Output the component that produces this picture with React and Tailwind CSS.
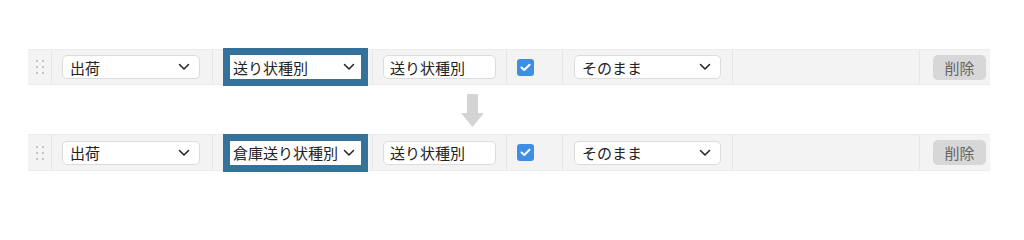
import React from 'react';

const font = { fontFamily: '"Noto Sans CJK JP", "Noto Sans", sans-serif' };

function Chevron() {
  return (
    <svg width="12" height="8" viewBox="0 0 12 8" className="shrink-0">
      <polyline points="1.5,1.5 6,6 10.5,1.5" fill="none" stroke="#222" strokeWidth="1.5" strokeLinecap="round" strokeLinejoin="round" />
    </svg>
  );
}

function FakeSelect({ label, className }) {
  return (
    <div className={'flex items-center justify-between bg-white border border-[#dcdcdc] rounded-[5px] pl-[7px] pr-[9px] text-[15px] text-[#222] ' + className}>
      <span className="leading-none whitespace-nowrap">{label}</span>
      <Chevron />
    </div>
  );
}

function DragHandle() {
  return (
    <div className="grid grid-cols-2 gap-x-[4px] gap-y-[4px]">
      {[0, 1, 2, 3, 4, 5].map((i) => (
        <span key={i} className="block w-[2px] h-[2px] bg-[#c4c4c4]"></span>
      ))}
    </div>
  );
}

function Row({ highlightLabel, tall }) {
  return (
    <div className={'flex w-[962px] bg-[#f3f3f3] border-y border-[#ececec] ' + (tall ? 'h-[37px]' : 'h-9')}>
      {/* ドラッグ */}
      <div className="w-[24px] flex items-center justify-center border-r border-[#e6e6e6]">
        <DragHandle />
      </div>
      <div className="w-[161px] flex items-center pl-[10px] border-r border-[#e6e6e6]">
        <FakeSelect label="出荷" className="w-[138px] h-6" />
      </div>
      {/* 強調表示 */}
      <div className="w-[160px] flex items-center pl-[16px] border-r border-[#e6e6e6]">
        <FakeSelect
          label={highlightLabel}
          className="w-[133px] h-[26px] outline-[6px] outline-solid outline-[#34729c] !border-[#34729c] !rounded-none !pr-[6px] !pl-[3px]"
        />
      </div>
      <div className="w-[134px] flex items-center pl-[10px] border-r border-[#e6e6e6]">
        <div className="w-[113px] h-6 flex items-center bg-white border border-[#dcdcdc] rounded-[5px] px-[6px] text-[15px] text-[#222]">
          <span className="leading-none">送り状種別</span>
        </div>
      </div>
      <div className="w-[56px] flex items-center pl-[10px] border-r border-[#e6e6e6]">
        <div className="w-[17px] h-[17px] rounded-[3px] bg-[#3d8fe6] flex items-center justify-center">
          <svg width="11" height="9" viewBox="0 0 11 9">
            <polyline points="1.5,4.5 4.3,7 9.5,1.8" fill="none" stroke="#fff" strokeWidth="2" strokeLinecap="round" strokeLinejoin="round" />
          </svg>
        </div>
      </div>
      <div className="w-[170px] flex items-center pl-[11px] border-r border-[#e6e6e6]">
        <FakeSelect label="そのまま" className="w-[147px] h-6" />
      </div>
      <div className="w-[187px] border-r border-[#e6e6e6]"></div>
      <div className="flex-1 flex items-center justify-end pr-[4px]">
        <div className="w-[53px] h-[25px] rounded-[5px] bg-[#d7d7d7] flex items-center justify-center">
          <span className="text-[#666666] text-[15px] leading-none">削除</span>
        </div>
      </div>
    </div>
  );
}

export default function App() {
  return (
    <div className="w-[1024px] h-[225px] bg-white pt-[49px] pl-[28px]" style={font}>
      <Row highlightLabel="送り状種別" />
      {/* 矢印 */}
      <div className="h-[49px] pl-[433px] pt-[9px]">
        <svg width="23" height="33" viewBox="0 0 23 33">
          <polygon points="6,0 17,0 17,19 23,19 11.5,33 0,19 6,19" fill="#d4d4d4" />
        </svg>
      </div>
      <Row highlightLabel="倉庫送り状種別" tall />
    </div>
  );
}
